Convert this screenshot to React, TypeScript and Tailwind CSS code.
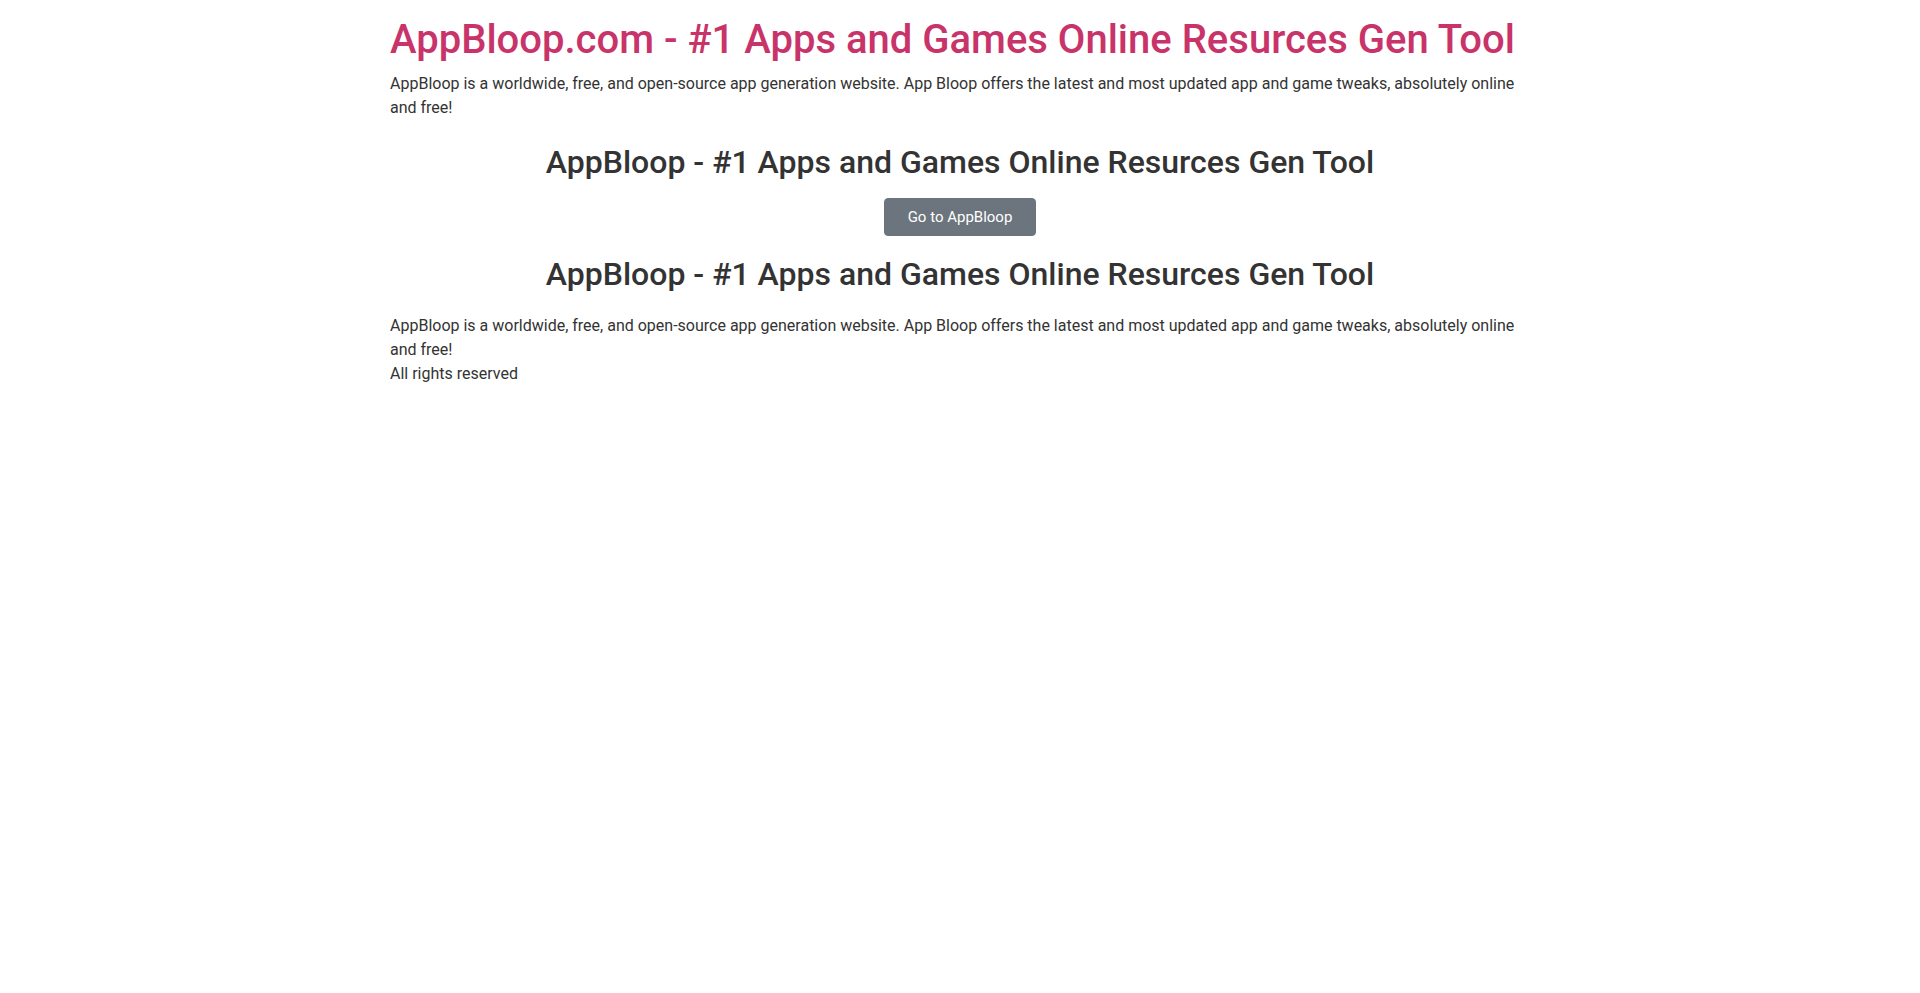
export default function App() {
  return (
    <div className="min-h-screen bg-white text-[#333] font-['Roboto','Liberation_Sans',sans-serif]">
      <div className="mx-auto w-[1140px] pt-4">
        <h1 className="text-[40px] leading-[48px] font-medium text-[#c8336a] mb-2">
          AppBloop.com - #1 Apps and Games Online Resurces Gen Tool
        </h1>
        <p className="text-base leading-6">
          AppBloop is a worldwide, free, and open-source app generation website. App Bloop offers the latest and most updated app and game tweaks, absolutely online and free!
        </p>

        <div className="text-center">
          <h2 className="mt-[23px] text-[32px] leading-[38px] font-medium">
            AppBloop - #1 Apps and Games Online Resurces Gen Tool
          </h2>
          <button className="mt-[17px] h-[38px] w-[152px] rounded bg-[#6c757d] border border-[#6c757d] text-white text-[15px]">
            Go to AppBloop
          </button>
          <h2 className="mt-[19px] text-[32px] leading-[38px] font-medium">
            AppBloop - #1 Apps and Games Online Resurces Gen Tool
          </h2>
        </div>

        <p className="mt-[21px] text-base leading-6">
          AppBloop is a worldwide, free, and open-source app generation website. App Bloop offers the latest and most updated app and game tweaks, absolutely online and free!
          <br />
          All rights reserved
        </p>
      </div>
    </div>
  );
}
